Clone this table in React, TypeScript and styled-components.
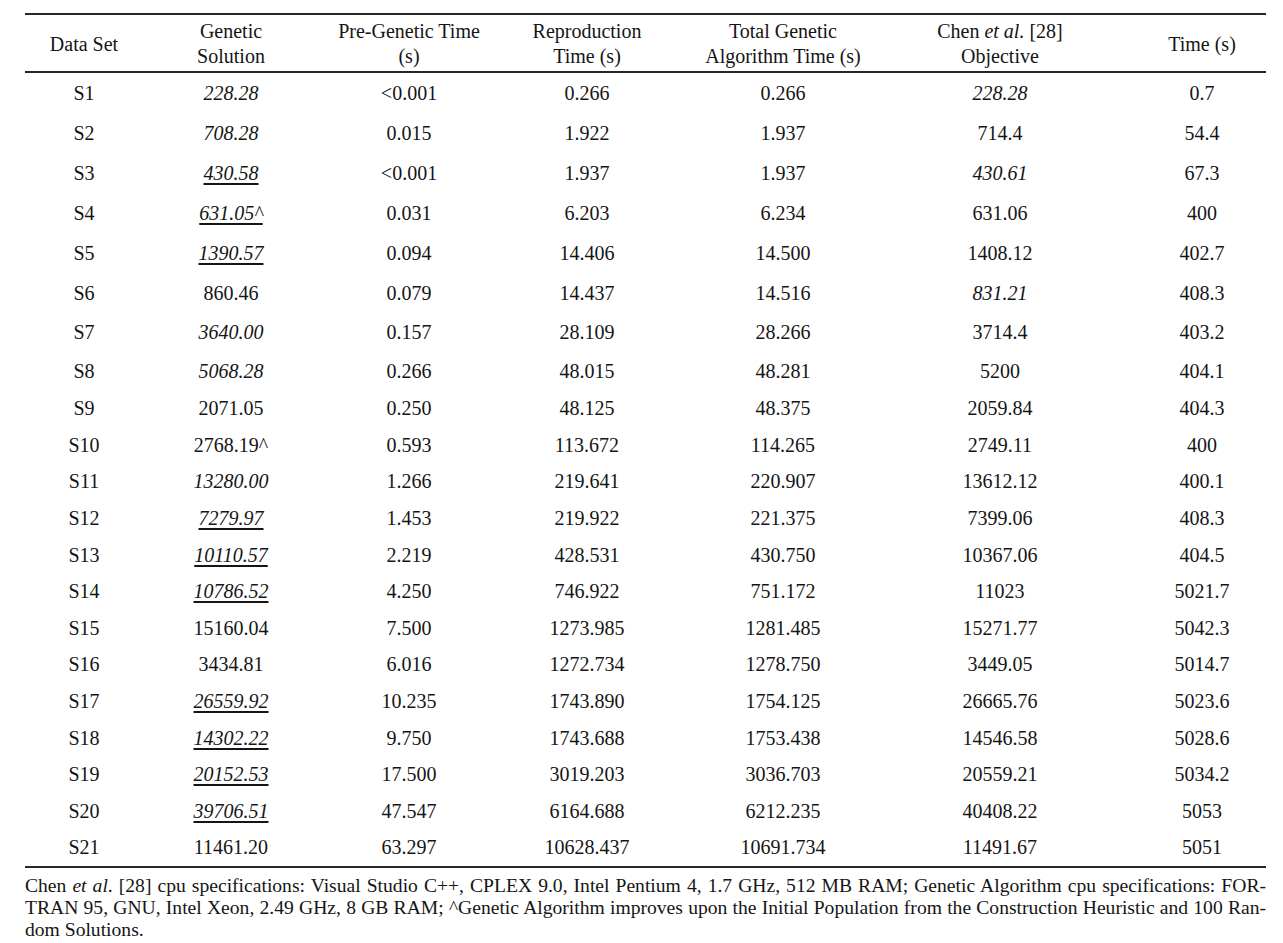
import React from "react";
import styled, { createGlobalStyle } from "styled-components";

const Global = createGlobalStyle`
  html, body { margin: 0; padding: 0; background: #ffffff; }
  body {
    font-family: "Liberation Serif", "Times New Roman", serif;
    color: #151515;
  }
`;

const COLS = "118px 176px 180px 176px 216px 218px 157px";
const RULE = "#262626";

const Page = styled.div`
  width: 1241px;
  padding: 13px 0 0 25px;
`;

const Table = styled.div`
  border-top: 2px solid ${RULE};
  border-bottom: 2px solid ${RULE};
`;

const HeadRow = styled.div`
  display: grid;
  grid-template-columns: ${COLS};
  height: 56px;
  border-bottom: 2px solid ${RULE};
  font-size: 20px;
  line-height: 25px;
`;

const HeadCell = styled.div<{ $shift?: number }>`
  display: flex;
  align-items: center;
  justify-content: center;
  text-align: center;
  padding-left: ${(p) => p.$shift ?? 0}px;
  padding-top: 2px;
`;

const Row = styled.div<{ $h: number }>`
  display: grid;
  grid-template-columns: ${COLS};
  height: ${(p) => p.$h}px;
  align-items: center;
  font-size: 20px;
  line-height: 24px;
`;

type Kind = "plain" | "italic" | "under";

const Cell = styled.div<{ $shift?: number; $kind?: Kind }>`
  text-align: center;
  padding-left: ${(p) => p.$shift ?? 0}px;
  font-style: ${(p) => (p.$kind === "italic" || p.$kind === "under" ? "italic" : "normal")};
  text-decoration: ${(p) => (p.$kind === "under" ? "underline" : "none")};
  text-decoration-thickness: 1.5px;
  text-underline-offset: 3px;
`;

const Em = styled.span`
  font-style: italic;
`;

const Footer = styled.div`
  margin-top: 7px;
  font-size: 19.6px;
  line-height: 22px;
`;

const FootLine = styled.div<{ $justify?: boolean }>`
  text-align: ${(p) => (p.$justify ? "justify" : "left")};
  text-align-last: ${(p) => (p.$justify ? "justify" : "left")};
  white-space: nowrap;
`;

type V = string | { v: string; k: Kind };

const rows: V[][] = [
  ["S1", { v: "228.28", k: "italic" }, "<0.001", "0.266", "0.266", { v: "228.28", k: "italic" }, "0.7"],
  ["S2", { v: "708.28", k: "italic" }, "0.015", "1.922", "1.937", "714.4", "54.4"],
  ["S3", { v: "430.58", k: "under" }, "<0.001", "1.937", "1.937", { v: "430.61", k: "italic" }, "67.3"],
  ["S4", { v: "631.05^", k: "under" }, "0.031", "6.203", "6.234", "631.06", "400"],
  ["S5", { v: "1390.57", k: "under" }, "0.094", "14.406", "14.500", "1408.12", "402.7"],
  ["S6", "860.46", "0.079", "14.437", "14.516", { v: "831.21", k: "italic" }, "408.3"],
  ["S7", { v: "3640.00", k: "italic" }, "0.157", "28.109", "28.266", "3714.4", "403.2"],
  ["S8", { v: "5068.28", k: "italic" }, "0.266", "48.015", "48.281", "5200", "404.1"],
  ["S9", "2071.05", "0.250", "48.125", "48.375", "2059.84", "404.3"],
  ["S10", "2768.19^", "0.593", "113.672", "114.265", "2749.11", "400"],
  ["S11", { v: "13280.00", k: "italic" }, "1.266", "219.641", "220.907", "13612.12", "400.1"],
  ["S12", { v: "7279.97", k: "under" }, "1.453", "219.922", "221.375", "7399.06", "408.3"],
  ["S13", { v: "10110.57", k: "under" }, "2.219", "428.531", "430.750", "10367.06", "404.5"],
  ["S14", { v: "10786.52", k: "under" }, "4.250", "746.922", "751.172", "11023", "5021.7"],
  ["S15", "15160.04", "7.500", "1273.985", "1281.485", "15271.77", "5042.3"],
  ["S16", "3434.81", "6.016", "1272.734", "1278.750", "3449.05", "5014.7"],
  ["S17", { v: "26559.92", k: "under" }, "10.235", "1743.890", "1754.125", "26665.76", "5023.6"],
  ["S18", { v: "14302.22", k: "under" }, "9.750", "1743.688", "1753.438", "14546.58", "5028.6"],
  ["S19", { v: "20152.53", k: "under" }, "17.500", "3019.203", "3036.703", "20559.21", "5034.2"],
  ["S20", { v: "39706.51", k: "under" }, "47.547", "6164.688", "6212.235", "40408.22", "5053"],
  ["S21", "11461.20", "63.297", "10628.437", "10691.734", "11491.67", "5051"],
];

const rowHeight = (i: number) => (i < 6 ? 40 : i < 8 ? 38.5 : 36.6);
const shiftFor = (c: number) => (c === 6 ? 29 : 0);

export default function App() {
  return (
    <Page>
      <Global />
      <Table>
        <HeadRow>
          <HeadCell>Data Set</HeadCell>
          <HeadCell>
            Genetic
            <br />
            Solution
          </HeadCell>
          <HeadCell>
            Pre-Genetic Time
            <br />
            (s)
          </HeadCell>
          <HeadCell>
            Reproduction
            <br />
            Time (s)
          </HeadCell>
          <HeadCell>
            Total Genetic
            <br />
            Algorithm Time (s)
          </HeadCell>
          <HeadCell>
            <span>
              Chen <Em>et al.</Em> [28]
              <br />
              Objective
            </span>
          </HeadCell>
          <HeadCell $shift={shiftFor(6)}>Time (s)</HeadCell>
        </HeadRow>
        {rows.map((r, i) => (
          <Row key={i} $h={rowHeight(i)}>
            {r.map((c, j) =>
              typeof c === "string" ? (
                <Cell key={j} $shift={shiftFor(j)}>
                  {c}
                </Cell>
              ) : (
                <Cell key={j} $shift={shiftFor(j)} $kind={c.k}>
                  {c.v}
                </Cell>
              )
            )}
          </Row>
        ))}
      </Table>
      <Footer>
        <FootLine $justify>
          Chen <Em>et al</Em>. [28] cpu specifications: Visual Studio C++, CPLEX 9.0, Intel Pentium 4, 1.7 GHz, 512 MB RAM; Genetic Algorithm cpu specifications: FOR-
        </FootLine>
        <FootLine $justify>
          TRAN 95, GNU, Intel Xeon, 2.49 GHz, 8 GB RAM; ^Genetic Algorithm improves upon the Initial Population from the Construction Heuristic and 100 Ran-
        </FootLine>
        <FootLine>dom Solutions.</FootLine>
      </Footer>
    </Page>
  );
}
